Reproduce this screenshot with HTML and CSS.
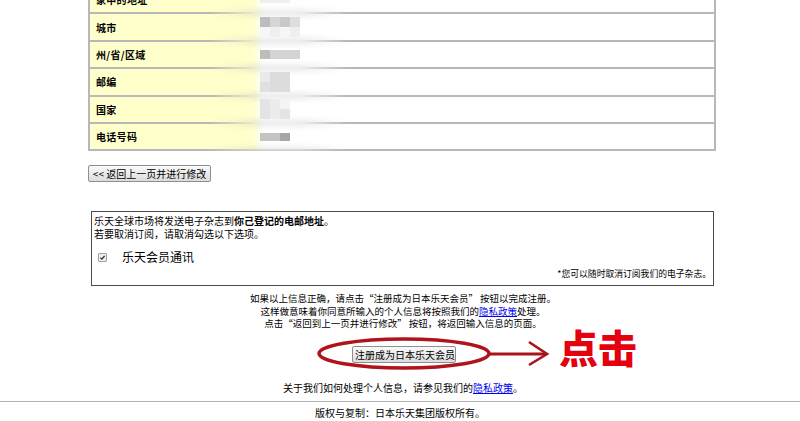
FILE: index.html
```html
<!DOCTYPE html>
<html lang="zh-CN">
<head>
<meta charset="utf-8">
<title>确认注册信息</title>
<link rel="stylesheet" href="styles.css">
</head>
<body>
<div class="page">
  <div class="table-wrap">
    <table class="info">
      <tr><th>家中的地址</th><td><span class="smudge s0"><i class="b1"></i><i class="b2"></i><i class="b3"></i></span></td></tr>
      <tr><th>城市</th><td><span class="smudge s1"><i class="b1"></i><i class="b2"></i><i class="b3"></i><i class="b4"></i><i class="c1"></i><i class="c2"></i><i class="c3"></i><i class="c4"></i></span></td></tr>
      <tr><th>州/省/区域</th><td><span class="smudge s2"><i class="b1"></i><i class="b2"></i><i class="b3"></i><i class="b4"></i></span></td></tr>
      <tr><th>邮编</th><td><span class="smudge s3"><i class="b1"></i><i class="b2"></i><i class="b3"></i><i class="b4"></i><i class="b5"></i><i class="b6"></i></span></td></tr>
      <tr><th>国家</th><td><span class="smudge s4"><i class="b1"></i><i class="b2"></i><i class="b3"></i><i class="b4"></i><i class="b5"></i><i class="b6"></i></span></td></tr>
      <tr><th>电话号码</th><td><span class="smudge s5"><i class="b1"></i><i class="b2"></i><i class="b3"></i></span></td></tr>
    </table>
    <div class="blur-band"></div>
  </div>

  <button class="btn back" type="button">&lt;&lt; 返回上一页并进行修改</button>

  <div class="mailbox">
    <p class="mail-text">乐天全球市场将发送电子杂志到<b>你己登记的电邮地址</b>。</p>
    <p class="mail-text">若要取消订阅，请取消勾选以下选项。</p>
    <label class="opt"><span class="check"><svg viewBox="0 0 8 8" width="8" height="8"><path d="M1.6 4.2 L3.3 5.8 L6.4 2.2" fill="none" stroke="#222" stroke-width="1.4"/></svg></span><span class="opt-label">乐天会员通讯</span></label>
    <p class="mail-note">*您可以随时取消订阅我们的电子杂志。</p>
  </div>

  <div class="notes">
    <p>如果以上信息正确，请点击“注册成为日本乐天会员” 按钮以完成注册。</p>
    <p>这样做意味着你同意所输入的个人信息将按照我们的<a href="#">隐私政策</a>处理。</p>
    <p>点击“返回到上一页并进行修改” 按钮，将返回输入信息的页面。</p>
  </div>

  <div class="submit-row">
    <button class="btn submit" type="button">注册成为日本乐天会员</button>
    <svg class="mark" width="240" height="34" viewBox="0 0 240 34">
      <ellipse cx="88" cy="16.5" rx="85" ry="14.5" fill="none" stroke="#b0131c" stroke-width="3.5"/>
      <path d="M172 17 L230 17" stroke="#a8141c" stroke-width="3" fill="none"/>
      <path d="M213 5 L231 17 L213 28" stroke="#a8141c" stroke-width="2.6" fill="none"/>
    </svg>
    <span class="click">点击</span>
  </div>

  <p class="about">关于我们如何处理个人信息，请参见我们的<a href="#">隐私政策</a>。</p>
</div>
<footer class="footer">版权与复制：日本乐天集团版权所有。</footer>
</body>
</html>
```

FILE: styles.css
```css
html, body {
  margin: 0;
  padding: 0;
  background: #fff;
}
body {
  font-family: "Noto Sans CJK SC", "Liberation Sans", sans-serif;
  color: #000;
  font-size: 10px;
  overflow: hidden;
}
p { margin: 0; }

.page {
  width: 628px;
  margin: -15px 0 0 88px;
}

.table-wrap {
  position: relative;
}
.info {
  width: 628px;
  border-collapse: collapse;
  border: 2px solid #b8b8b8;
}
.info th, .info td {
  height: 25.4px;
  padding: 0;
  border-bottom: 2px solid #b8b8b8;
  vertical-align: middle;
}
.info th {
  width: 162px;
  background: #ffffcc;
  text-align: left;
  font-weight: bold;
  font-size: 10px;
  padding-left: 6px;
  letter-spacing: 0.3px;
}
.info td {
  background: #fff;
  padding-left: 2px;
}
.blur-band {
  position: absolute;
  z-index: 1;
  left: 120px;
  top: 0;
  width: 140px;
  height: 100%;
  backdrop-filter: blur(3px);
  -webkit-mask-image: linear-gradient(to right, transparent, #000 35%, #000 65%, transparent);
  mask-image: linear-gradient(to right, transparent, #000 35%, #000 65%, transparent);
}

.smudge {
  position: relative;
  z-index: 2;
  display: flex;
  flex-wrap: wrap;
  width: 40px;
}
.smudge i {
  display: block;
  height: 9px;
  width: 10px;
}
.s0 i { background: #efefef; height: 6px; }
.s1 i { background: #d6d6d6; height: 10px; }
.s1 .b1 { background: #bdbdbd; }
.s1 .b3 { background: #c9c9c9; }
.s1 .b4 { background: #dedede; }
.s1 .c1, .s1 .c3 { background: #f6f6f6; }
.s1 .c2, .s1 .c4 { background: #efefef; }
.s2 i { background: #d4d4d4; height: 9px; }
.s2 .b1 { background: #bdbdbd; }
.s3 { width: 30px; }
.s3 i { background: #dcdcdc; height: 10px; }
.s3 .b1 { background: #eaeaea; }
.s3 .b4 { background: #e0e0e0; }
.s4 { width: 30px; }
.s4 i { background: #e4e4e4; height: 10px; }
.s4 .b2 { background: #ececec; }
.s4 .b3 { background: #f4f4f4; }
.s4 .b5 { background: #ececec; }
.s5 { width: 30px; }
.s5 i { background: #c4c4c4; height: 8px; }
.s5 .b3 { background: #a6a6a6; }

.btn {
  font-family: "Noto Sans CJK SC", "Liberation Sans", sans-serif;
  font-size: 10px;
  line-height: 15px;
  height: 17px;
  padding: 0 2px;
  color: #000;
  background: linear-gradient(#fafafa, #dcdcdc);
  border: 1px solid #8e8e8e;
  border-radius: 2px;
  display: block;
  white-space: nowrap;
}
.back {
  margin-top: 14px;
  width: 123px;
}

.mailbox {
  margin: 29px 2px 0 3px;
  border: 1px solid #4a4a4a;
  padding: 2px 2px 4px 2px;
  height: 67px;
  box-sizing: content-box;
}
.mail-text {
  font-size: 10px;
  line-height: 13px;
  height: 13px;
  overflow: visible;
}
.opt {
  display: flex;
  align-items: center;
  margin-top: 10px;
  height: 14px;
}
.check {
  display: inline-flex;
  width: 7px;
  height: 7px;
  margin-left: 4px;
  border: 1px solid #a0a0a0;
  background: #f0f0f0;
  border-radius: 1px;
}
.check svg { display: block; width: 7px; height: 7px; }
.opt-label {
  margin-left: 15px;
  font-size: 12px;
  line-height: 14px;
}
.mail-note {
  text-align: right;
  font-size: 8.8px;
  line-height: 12px;
  margin-top: 4px;
}

.notes {
  margin-top: 6px;
  text-align: center;
  font-size: 9.5px;
  line-height: 12.5px;
  padding-left: 2px;
}
a { color: #0000ee; text-decoration: underline; }

.submit-row {
  position: relative;
  margin-top: 16px;
  height: 17px;
}
.submit {
  margin: 0 auto;
  width: 104px;
  position: relative;
  left: 2px;
}
.mark {
  position: absolute;
  left: 228px;
  top: -9px;
}
.click {
  position: absolute;
  left: 471px;
  top: -22px;
  font-size: 39px;
  line-height: 44px;
  font-weight: 900;
  color: #e5000f;
}

.about {
  margin-top: 18px;
  text-align: center;
  font-size: 10px;
  line-height: 13px;
  padding-left: 2px;
}

.footer {
  margin-top: 7px;
  border-top: 1px solid #b4b4b4;
  text-align: center;
  font-size: 10px;
  line-height: 21px;
}
```
